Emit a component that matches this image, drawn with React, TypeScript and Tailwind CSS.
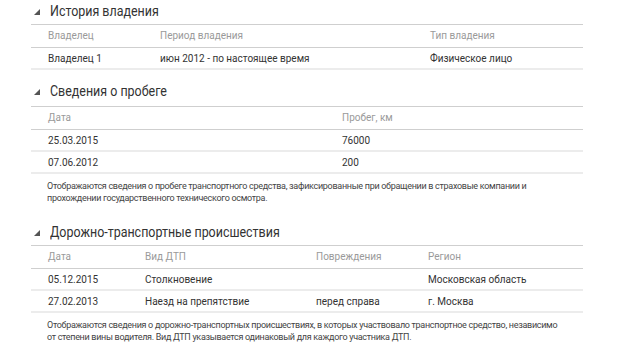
import React from 'react'

type Section = {
  title: string
  cols: string
  head: string[]
  rows: string[][]
  note?: string[]
  gap: string
  headH: string
}

const sections: Section[] = [
  {
    title: 'История владения',
    cols: 'grid-cols-[112px_270px_1fr]',
    head: ['Владелец', 'Период владения', 'Тип владения'],
    rows: [['Владелец 1', 'июн 2012 - по настоящее время', 'Физическое лицо']],
    gap: '',
    headH: 'h-[24px] pb-[1px]',
  },
  {
    title: 'Сведения о пробеге',
    cols: 'grid-cols-[294px_1fr]',
    head: ['Дата', 'Пробег, км'],
    rows: [
      ['25.03.2015', '76000'],
      ['07.06.2012', '200'],
    ],
    note: [
      'Отображаются сведения о пробеге транспортного средства, зафиксированные при обращении в страховые компании и',
      'прохождении государственного технического осмотра.',
    ],
    gap: 'mt-[10px]',
    headH: 'h-[26px] pb-[3px]',
  },
  {
    title: 'Дорожно-транспортные происшествия',
    cols: 'grid-cols-[97px_171px_112px_1fr]',
    head: ['Дата', 'Вид ДТП', 'Повреждения', 'Регион'],
    rows: [
      ['05.12.2015', 'Столкновение', '', 'Московская область'],
      ['27.02.2013', 'Наезд на препятствие', 'перед справа', 'г. Москва'],
    ],
    note: [
      'Отображаются сведения о дорожно-транспортных происшествиях, в которых участвовало транспортное средство, независимо',
      'от степени вины водителя. Вид ДТП указывается одинаковый для каждого участника ДТП.',
    ],
    gap: 'mt-[17px]',
    headH: 'h-[24px] pb-[1px]',
  },
]

const Triangle = () => (
  <svg width="6" height="6" viewBox="0 0 6 6" className="shrink-0">
    <polygon points="6,0 6,6 0,6" fill="#555" />
  </svg>
)

const Block = ({ s }: { s: Section }) => (
  <section className={s.gap}>
    {/* heading */}
    <div className={`flex items-center gap-[10px] pl-[3px] ${s.headH}`}>
      <Triangle />
      <h2 className="text-[15px] leading-none text-[#333] whitespace-nowrap origin-left scale-x-[0.83]">
        {s.title}
      </h2>
    </div>

    {/* table */}
    <div className="border-t border-[#cfcfcf]">
      <div className={`grid ${s.cols} h-[23px] items-center pl-[17px] pb-[1px] border-b border-[#cfcfcf] text-[10px] text-[#9a9a9a]`}>
        {s.head.map((h, i) => (
          <div key={i}>{h}</div>
        ))}
      </div>
      {s.rows.map((r, ri) => (
        <div
          key={ri}
          className={`grid ${s.cols} h-[22px] items-center pl-[17px] border-b-2 border-[#ececec] text-[10px] text-[#333]`}
        >
          {r.map((c, ci) => (
            <div key={ci}>{c}</div>
          ))}
        </div>
      ))}
    </div>

    {s.note && (
      <div className="pt-[6px] pl-[16px] text-[9px] leading-[12px] tracking-[-0.3px] text-[#444]">
        {s.note.map((l, i) => (
          <div key={i} className="whitespace-nowrap">{l}</div>
        ))}
      </div>
    )}
  </section>
)

export default function App() {
  return (
    <div className="w-[620px] h-[357px] overflow-hidden bg-white font-['Roboto',sans-serif]">
      <div className="ml-[31px] w-[552px]">
        {sections.map((s, i) => (
          <Block key={i} s={s} />
        ))}
      </div>
    </div>
  )
}
